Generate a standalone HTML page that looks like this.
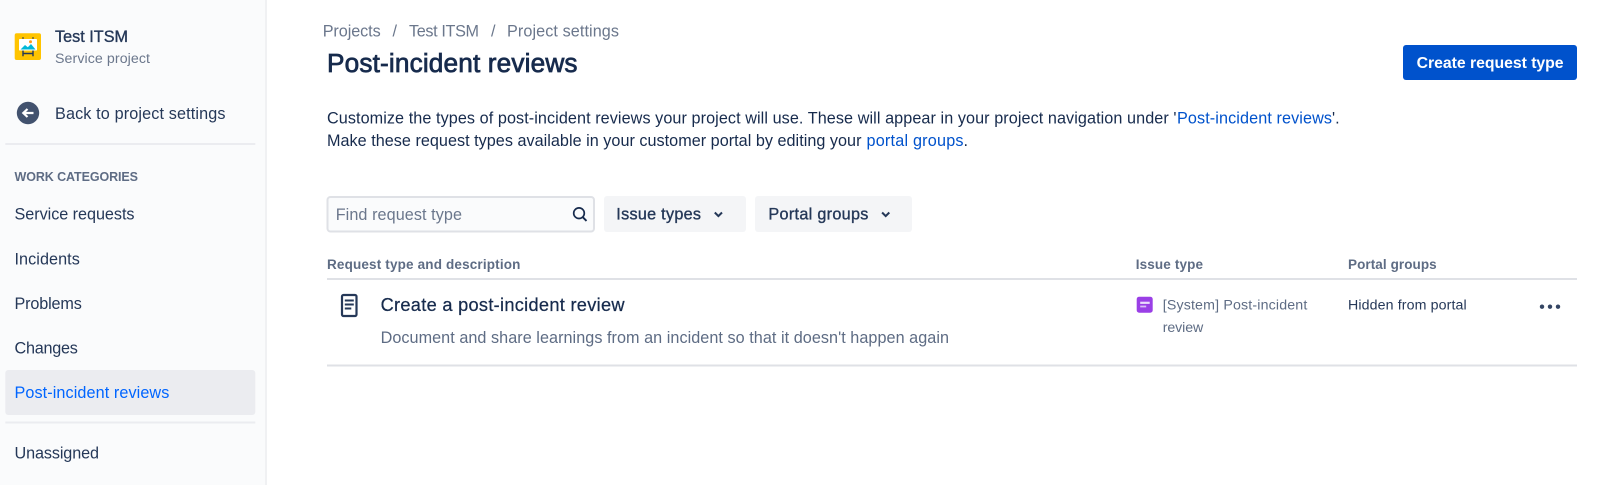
<!DOCTYPE html>
<html lang="en">
<head>
<meta charset="utf-8">
<title>Post-incident reviews</title>
<style>
html,body{margin:0;padding:0;background:#fff;width:1600px;height:485px;overflow:hidden}
svg{display:block}
text{font-family:"Liberation Sans",sans-serif;white-space:pre}
.b{font-size:16.2px;fill:#253858}
.s{font-size:14.2px}
.m{stroke-width:.35px}
</style>
</head>
<body>
<svg width="1600" height="485" viewBox="0 0 1600 485" xmlns="http://www.w3.org/2000/svg">
<rect width="1600" height="485" fill="#fff"/>
<rect width="265" height="485" fill="#FAFBFC"/>
<rect x="265" width="2" height="485" fill="#F0F1F3"/>

<rect x="14.700" y="33.300" width="26.300" height="26.700" rx="2" fill="#FFC400"/>
<path d="M23 37v3M33 37v3" stroke="#253858" stroke-width="1"/>
<rect x="19" y="39" width="18" height="11.500" rx=".8" fill="#fff"/>
<path d="M20.500 49.500l4.500-4.500 2.800 2.300 3.200-3.300 4.500 5.500z" fill="#00B8D9"/>
<circle cx="30.500" cy="41.700" r="1.500" fill="#FF991F"/>
<path d="M23 50.500v5.800M33 50.500v5.800M23 53.500h10" stroke="#253858" stroke-width="1.400"/>
<text x="55" y="41.800" class="b m" textLength="73" stroke="#253858" style="fill:#253858">Test ITSM</text>
<text x="55" y="63" class="s" textLength="95" fill="#6B778C">Service project</text>

<circle cx="28" cy="113" r="11.200" fill="#42526E"/>
<path d="M33.500 113H24M27.500 109l-4.200 4 4.200 4" fill="none" stroke="#fff" stroke-width="2.200"/>
<text x="55" y="118.800" class="b" textLength="170.500">Back to project settings</text>
<rect x="5.300" y="143" width="250" height="2" fill="#EBECF0"/>

<text x="14.500" y="180.800" font-size="12.500" font-weight="700" fill="#5E6C84" textLength="123.500">WORK CATEGORIES</text>
<text x="14.500" y="219.500" class="b" textLength="120">Service requests</text>
<text x="14.500" y="264.300" class="b" textLength="65.300">Incidents</text>
<text x="14.500" y="308.800" class="b" textLength="67.300">Problems</text>
<text x="14.500" y="353.300" class="b" textLength="63.300">Changes</text>
<rect x="5.300" y="370" width="250" height="45" rx="3" fill="#EBECF0"/>
<text x="14.500" y="398.200" font-size="16.200" fill="#0065FF" textLength="154.800">Post-incident reviews</text>
<rect x="5.300" y="421.500" width="250" height="2" fill="#EBECF0"/>
<text x="14.500" y="458.300" class="b" textLength="84.500">Unassigned</text>

<text x="322.700" y="36.700" font-size="16.200" fill="#6B778C" textLength="58">Projects</text>
<text x="392.500" y="36.700" font-size="16.200" fill="#6B778C">/</text>
<text x="409" y="36.700" font-size="16.200" fill="#6B778C" textLength="70">Test ITSM</text>
<text x="491" y="36.700" font-size="16.200" fill="#6B778C">/</text>
<text x="507" y="36.700" font-size="16.200" fill="#6B778C" textLength="112">Project settings</text>
<text x="327" y="72" font-size="26.200" fill="#172B4D" stroke="#172B4D" stroke-width=".75" textLength="250.500">Post-incident reviews</text>

<rect x="1403" y="45" width="174" height="35" rx="3" fill="#0052CC"/>
<text x="1416.600" y="68" font-size="15.800" font-weight="700" fill="#fff" textLength="147">Create request type</text>

<text x="327" y="123.500" class="b" style="fill:#172B4D" textLength="849.500">Customize the types of post-incident reviews your project will use. These will appear in your project navigation under '</text>
<text x="1177" y="123.500" font-size="16.200" fill="#0052CC" textLength="155">Post-incident reviews</text>
<text x="1332" y="123.500" class="b" style="fill:#172B4D">'.</text>
<text x="327" y="146.200" class="b" style="fill:#172B4D" textLength="539">Make these request types available in your customer portal by editing your </text>
<text x="866.500" y="146.200" font-size="16.200" fill="#0052CC" textLength="97">portal groups</text>
<text x="963.500" y="146.200" class="b" style="fill:#172B4D">.</text>

<rect x="327.500" y="197" width="266.500" height="34.500" rx="3" fill="#FAFBFC" stroke="#DFE1E6" stroke-width="2"/>
<text x="335.700" y="219.900" font-size="16.200" fill="#6B778C" textLength="126.300">Find request type</text>
<circle cx="579" cy="213.200" r="5.300" fill="none" stroke="#172B4D" stroke-width="1.700"/>
<path d="M582.800 217.200l3.700 3.700" stroke="#172B4D" stroke-width="1.900"/>

<rect x="604" y="196" width="142" height="36" rx="3" fill="#F4F5F7"/>
<text x="616.300" y="219.400" class="b m" stroke="#253858" textLength="84.700">Issue types</text>
<path d="M714.800 212.500l3.600 3.600 3.600-3.600" fill="none" stroke="#253858" stroke-width="2"/>
<rect x="755" y="196" width="157" height="36" rx="3" fill="#F4F5F7"/>
<text x="768.400" y="219.400" class="b m" stroke="#253858" textLength="100">Portal groups</text>
<path d="M882.100 212.500l3.600 3.600 3.600-3.600" fill="none" stroke="#253858" stroke-width="2"/>

<text x="327" y="268.800" font-size="13.500" font-weight="700" fill="#5E6C84" textLength="193.400">Request type and description</text>
<text x="1135.700" y="268.800" font-size="13.500" font-weight="700" fill="#5E6C84" textLength="67.300">Issue type</text>
<text x="1348" y="268.800" font-size="13.500" font-weight="700" fill="#5E6C84" textLength="88.700">Portal groups</text>
<rect x="327" y="278" width="1250" height="2" fill="#DFE1E6"/>

<rect x="342" y="295" width="14.500" height="21" rx="1.500" fill="none" stroke="#253858" stroke-width="2.200"/>
<path d="M344.800 300.500h9M344.800 304.500h9M344.800 308.500h6.500" stroke="#253858" stroke-width="2"/>
<text x="380.600" y="311" font-size="18.200" fill="#172B4D" stroke="#172B4D" stroke-width=".25" textLength="243.900">Create a post-incident review</text>
<text x="380.600" y="342.800" font-size="16.200" fill="#5E6C84" textLength="568.400">Document and share learnings from an incident so that it doesn't happen again</text>

<rect x="1136.700" y="296.700" width="16" height="16" rx="2.500" fill="#9A3FE6"/>
<path d="M1140.200 302.800h9.500" stroke="#EBDDFB" stroke-width="2.200"/>
<path d="M1140.200 306.500h6" stroke="#D9BDF7" stroke-width="1.800"/>
<text x="1162.700" y="309.500" class="s" fill="#5E6C84" textLength="144.600">[System] Post-incident</text>
<text x="1162.700" y="331.800" class="s" fill="#5E6C84" textLength="40.600">review</text>
<text x="1348" y="309.500" class="s" fill="#253858" textLength="118.700">Hidden from portal</text>
<circle cx="1542" cy="306.700" r="2.200" fill="#344563"/>
<circle cx="1550" cy="306.700" r="2.200" fill="#344563"/>
<circle cx="1558" cy="306.700" r="2.200" fill="#344563"/>
<rect x="327" y="364.500" width="1250" height="2" fill="#DFE1E6"/>
</svg>
</body>
</html>
